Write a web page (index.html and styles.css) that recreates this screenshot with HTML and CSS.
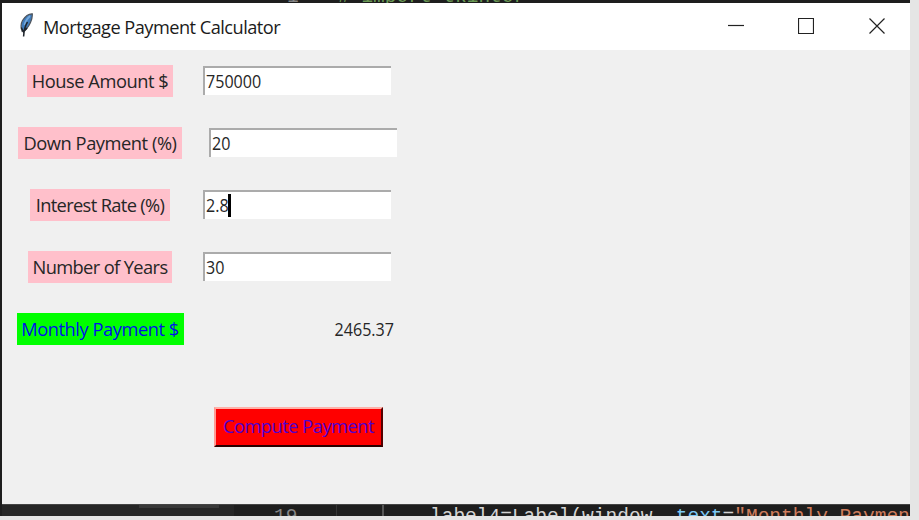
FILE: index.html
```html
<!DOCTYPE html>
<html lang="en">
<head>
<meta charset="utf-8">
<title>Mortgage Payment Calculator</title>
<link rel="stylesheet" href="styles.css">
</head>
<body>
<div class="desktop">
  <div class="code-top"><span class="line-no">1</span><span class="comment"># import tkinter</span></div>
  <main class="window">
    <header class="titlebar">
      <svg class="feather" width="14" height="24" viewBox="0 0 14 24">
        <path d="M13.300.8C9.500.6 6 3.500 3.500 7.500C1.800 10.500 1.600 14.500 3.200 18.500C6.500 17.500 9.500 14 11.500 9.500C12.800 6.500 13.500 3.500 13.300.8Z" fill="#3f7cbc" stroke="#50555c" stroke-width="1.200"/>
        <path d="M11 3C8.500 5 6.500 8 5.500 12" fill="none" stroke="#76aadc" stroke-width="1.700"/>
        <path d="M8.500 9C6.500 12 5 16 4.600 23.500M2.300 14.500L4.500 19L8 15" fill="none" stroke="#20252c" stroke-width="1.500"/>
      </svg>
      <h1 class="title"><span>Mortgage Payment Calculator</span></h1>
      <div class="controls">
        <svg width="16" height="16" viewBox="0 0 16 16"><path d="M0 7.500H16"/></svg>
        <svg width="16" height="16" viewBox="0 0 16 16"><path d="M.5.5H15.500V15.500H.5Z"/></svg>
        <svg width="16" height="16" viewBox="0 0 16 16"><path d="M.5.5L15.500 15.500M15.500.5L.5 15.500"/></svg>
      </div>
    </header>
    <section class="form">
      <div class="row"><div class="cell"><label class="label w1">House Amount $</label></div><div class="entry"><span>750000</span></div></div>
      <div class="row"><div class="cell"><label class="label w2">Down Payment (%)</label></div><div class="entry shifted"><span>20</span></div></div>
      <div class="row"><div class="cell"><label class="label w3">Interest Rate (%)</label></div><div class="entry"><span>2.8</span><i class="caret"></i></div></div>
      <div class="row"><div class="cell"><label class="label w4">Number of Years</label></div><div class="entry"><span>30</span></div></div>
      <div class="row"><div class="cell"><label class="label result w5">Monthly Payment $</label></div><output class="value">2465.37</output></div>
      <button class="compute">Compute Payment</button>
    </section>
  </main>
  <div class="code-bottom"><div class="sidebar"><i class="scroll"></i></div><span class="line-no">19</span><i class="guide"></i><i class="guide strong"></i><code>label4=Label(window, <b>text</b>=<em>"Monthly Paymen</em></code></div>
</div>
</body>
</html>
```
FILE: styles.css
```css
* { box-sizing: border-box; }
body { margin: 0; width: 919px; height: 520px; overflow: hidden; background: #e5e5e5; font-family: "Open Sans", sans-serif; }
.desktop { width: 910px; height: 516px; background: #1e1e1e; overflow: hidden; padding-left: 2px; }
.code-top, .code-bottom { font-family: "Liberation Mono", monospace; font-size: 19.500px; white-space: pre; overflow: hidden; display: flex; }
.code-top { height: 3px; line-height: 22px; }
.code-top span { height: 22px; margin-top: -14px; }
.code-top .line-no { margin-left: 285px; width: 51px; }
.line-no { color: #858585; }
.comment { color: #6a9955; }
.window { width: 908px; height: 501px; background: #f0f0f0; }
.titlebar { height: 47px; background: #fff; display: flex; align-items: center; padding-left: 17px; }
.feather { margin-top: -3px; }
.title { margin: 1px 0 0 10px; font-size: 18.200px; font-weight: 400; line-height: 24px; color: #1b1b1b; white-space: nowrap; letter-spacing: -.52px; }
.controls { margin-left: auto; display: flex; gap: 55px; padding-right: 25px; }
.controls svg { fill: none; stroke: #222; stroke-width: 1.200; }
.controls svg:first-child { margin-right: 0; transform: translateX(1px); }
.controls svg { margin-top: -1px; }
.form { padding-top: 15px; font-size: 18.300px; color: #262626; }
.row { display: flex; height: 62px; align-items: flex-start; }
.cell { width: 201px; display: flex; justify-content: center; padding-right: 5px; }
.label { height: 32px; line-height: 32px; background: #ffc0cb; text-align: center; white-space: nowrap; letter-spacing: -.45px; }
.w1 { width: 146px; }
.w2 { width: 164px; }
.w3 { width: 140px; letter-spacing: -.65px; }
.w4 { width: 144px; letter-spacing: -.62px; }
.w5 { width: 167px; }
.result { background: #0f0; color: #0011e8; }
.entry { width: 188px; height: 29px; margin-top: 1px; background: #fff; border-top: 2px solid #ababab; border-left: 2px solid #ababab; padding-left: 1px; line-height: 25px; display: flex; align-items: center; }
.entry span { transform: scaleX(.88); transform-origin: left; margin-top: -2px; }
.shifted { margin-left: 6px; }
.caret { width: 3px; height: 23px; background: #000; margin-left: -4px; }
.value { width: 191px; line-height: 32px; text-align: right; transform: scaleX(.88); transform-origin: right; }
.compute { display: block; margin: 32px 0 0 212px; width: 169px; height: 40px; padding: 0 0 3px; border: 2px solid; border-color: #ffb0a8 #500 #2b0000 #ff9b94; background: #f00; color: #5000d0; font: 18.300px "Open Sans", sans-serif; letter-spacing: -.5px; white-space: nowrap; }
.code-bottom { height: 12px; line-height: 24px; color: #d4d4d4; border-top: 1px solid #444; }
.sidebar { width: 232px; background: #262626; height: 12px; padding-left: 137px; }
.scroll { display: block; width: 80px; height: 3px; background: #393939; }
.code-bottom .line-no { margin-left: 40px; width: 62px; }
.guide { width: 1px; height: 12px; background: #353535; margin-right: 45px; }
.guide.strong { width: 2px; background: #555; margin-right: 46px; }
.code-bottom code { font: inherit; }
.code-bottom b { color: #7cc8f4; font-weight: 400; }
.code-bottom em { color: #ce7c5c; font-style: normal; }
```
